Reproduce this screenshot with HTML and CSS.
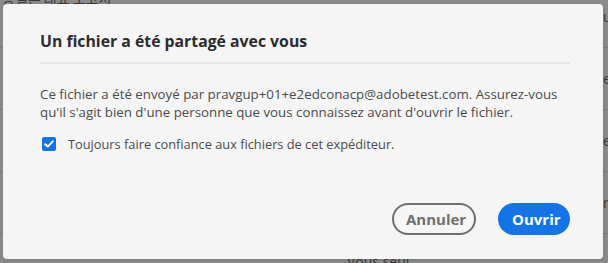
FILE: index.html
```html
<!DOCTYPE html>
<html lang="fr">
<head>
  <meta charset="UTF-8" />
  <meta name="viewport" content="width=device-width, initial-scale=1.0"/>
  <title>Fichier partagé</title>
  <link rel="stylesheet" href="styles.css">
</head>
<body>
  <div class="backdrop">
    <div class="page">
      <div class="page-top">앙텔론 대표 보고서</div>
      <div class="page-row"><span>uj</span></div>
      <div class="page-row"><span>e</span></div>
      <div class="page-row"><span>e</span></div>
      <div class="page-row"><span>n</span></div>
      <div class="page-bottom">Vous seul</div>
    </div>

    <div class="dialog" role="dialog">
      <h2 class="dialog-title">Un fichier a été partagé avec vous</h2>
      <div class="dialog-body">
        <p>Ce fichier a été envoyé par pravgup+01+e2edconacp@adobetest.com. Assurez-vous qu'il s'agit bien d'une personne que vous connaissez avant d'ouvrir le fichier.</p>
        <label class="check">
          <span class="box">
            <svg width="10" height="8" viewBox="0 0 10 8"><path d="M1.2 4.2 L3.8 6.6 L8.8 1.4" fill="none" stroke="#fff" stroke-width="2" stroke-linecap="round" stroke-linejoin="round"/></svg>
          </span>
          Toujours faire confiance aux fichiers de cet expéditeur.
        </label>
      </div>
      <div class="dialog-buttons">
        <button class="btn btn-secondary">Annuler</button>
        <button class="btn btn-primary">Ouvrir</button>
      </div>
    </div>
  </div>
</body>
</html>
```

FILE: styles.css
```css
body {
  margin: 0;
  font-family: "Open Sans", "Noto Sans", sans-serif;
  background: #8c8c8c;
}
.backdrop {
  position: relative;
  width: 608px;
  height: 263px;
  overflow: hidden;
  background: #8c8c8c;
}
.page {
  color: #3a3a3a;
  font-size: 14px;
}
.page-top {
  margin-top: -9px;
  margin-bottom: -19px;
  padding-left: 2px;
  font-family: "Noto Sans CJK KR", sans-serif;
  font-size: 14px;
  line-height: 14px;
  height: 14px;
}
.page-row {
  height: 61px;
  border-bottom: 1px solid #7e7e7e;
  display: flex;
  align-items: center;
  justify-content: flex-end;
}
.page-row span {
  width: 5px;
  overflow: hidden;
}
.page-bottom {
  padding-left: 347px;
  margin-top: 21px;
  line-height: 14px;
}
.dialog {
  position: absolute;
  left: 3px;
  top: 4px;
  width: 600px;
  height: 255px;
  box-sizing: border-box;
  background: #f5f5f5;
  border-radius: 4px;
  padding: 26px 33px 24px 37px;
  display: flex;
  flex-direction: column;
  box-shadow: 0 1px 4px rgba(0,0,0,0.15);
}
.dialog-title {
  margin: 0;
  font-size: 15.8px;
  font-weight: 700;
  color: #2c2c2c;
  padding-bottom: 10px;
  border-bottom: 2px solid #e4e4e4;
}
.dialog-body {
  flex: 1;
  font-size: 12.8px;
  color: #4b4b4b;
}
.dialog-body p {
  margin: 22px 0 0;
  font-size: 13.3px;
  line-height: 17.5px;
}
.check {
  display: flex;
  align-items: center;
  margin-top: 14px;
  margin-left: 2px;
  color: #4b4b4b;
}
.box {
  width: 14px;
  height: 14px;
  border-radius: 2px;
  background: #1473e6;
  display: flex;
  align-items: center;
  justify-content: center;
  margin-right: 12px;
}
.dialog-buttons {
  display: flex;
  justify-content: flex-end;
  gap: 22px;
}
.btn {
  height: 32px;
  border-radius: 16px;
  font-family: inherit;
  font-size: 15px;
  font-weight: 700;
  padding: 0 12px;
  cursor: pointer;
}
.btn-secondary {
  background: transparent;
  border: 2px solid #6e6e6e;
  color: #6e6e6e;
  width: 84px;
}
.btn-primary {
  background: #1473e6;
  border: 2px solid #1473e6;
  color: #fff;
  width: 72px;
}
.btn-primary:hover {
  background: #0d66d0;
}
```
